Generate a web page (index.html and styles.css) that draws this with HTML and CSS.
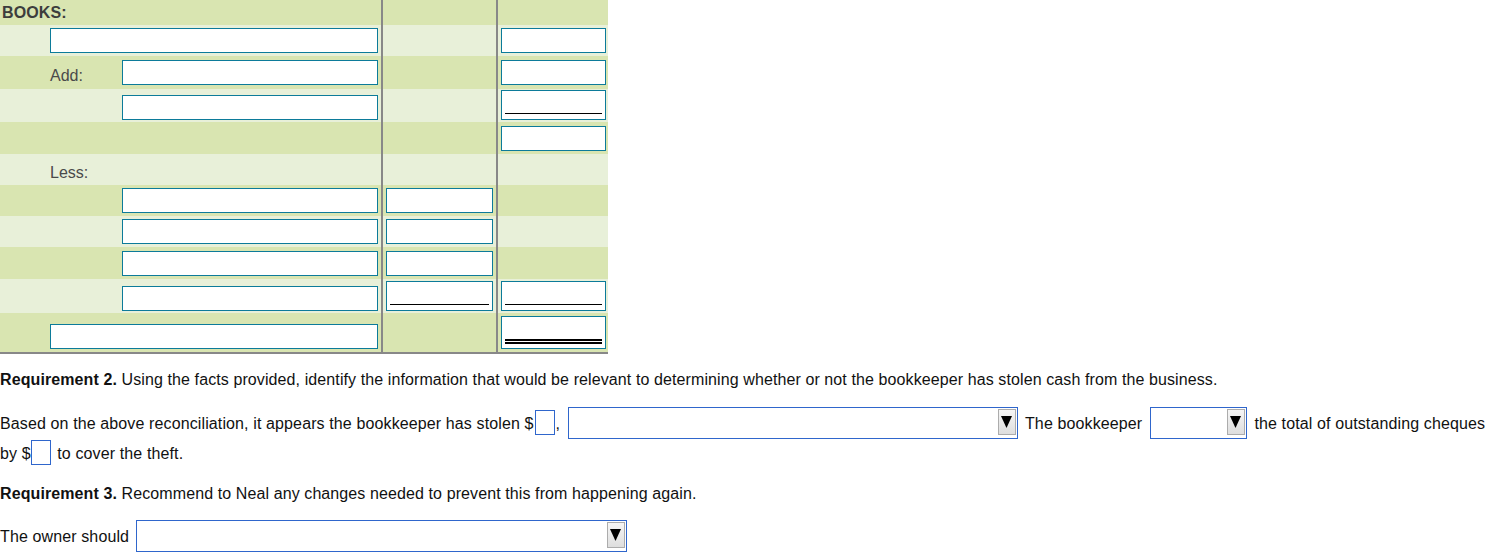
FILE: index.html
```html
<!DOCTYPE html>
<html>
<head>
<meta charset="utf-8">
<title>Bank reconciliation</title>
<link rel="stylesheet" href="styles.css">
</head>
<body>
<div class="recon">
  <div class="row dark r25">
    <div class="cell c1 books">BOOKS:</div><div class="cell c2"></div><div class="cell c3"></div>
  </div>
  <div class="row light r31">
    <div class="cell c1"><div class="inp"></div></div><div class="cell c2"></div><div class="cell c3"><div class="inp"></div></div>
  </div>
  <div class="row dark r33 pb4">
    <div class="cell c1"><span class="lbl">Add:</span><div class="inp"></div></div><div class="cell c2"></div><div class="cell c3"><div class="inp"></div></div>
  </div>
  <div class="row light r33 pb2">
    <div class="cell c1"><div class="inp ind"></div></div><div class="cell c2"></div><div class="cell c3"><div class="inp tall"><span class="rule"></span></div></div>
  </div>
  <div class="row dark r32">
    <div class="cell c1"></div><div class="cell c2"></div><div class="cell c3"><div class="inp"></div></div>
  </div>
  <div class="row light r31">
    <div class="cell c1"><span class="lbl">Less:</span></div><div class="cell c2"></div><div class="cell c3"></div>
  </div>
  <div class="row dark r31">
    <div class="cell c1"><div class="inp ind"></div></div><div class="cell c2"><div class="inp"></div></div><div class="cell c3"></div>
  </div>
  <div class="row light r31">
    <div class="cell c1"><div class="inp ind"></div></div><div class="cell c2"><div class="inp"></div></div><div class="cell c3"></div>
  </div>
  <div class="row dark r32">
    <div class="cell c1"><div class="inp ind"></div></div><div class="cell c2"><div class="inp"></div></div><div class="cell c3"></div>
  </div>
  <div class="row light r34 pb2">
    <div class="cell c1"><div class="inp ind"></div></div><div class="cell c2"><div class="inp tall"><span class="rule"></span></div></div><div class="cell c3"><div class="inp tall"><span class="rule"></span></div></div>
  </div>
  <div class="row dark r39">
    <div class="cell c1"><div class="inp"></div></div><div class="cell c2"></div><div class="cell c3"><div class="inp taller"><span class="rule2"></span></div></div>
  </div>
</div>

<p class="q q2"><b>Requirement 2.</b> Using the facts provided, identify the information that would be relevant to determining whether or not the bookkeeper has stolen cash from the business.</p>
<p class="fill f1">Based on the above reconciliation, it appears the bookkeeper has stolen $<span class="box"></span>, <span class="sel sel-wide"><span class="selin"><span class="btn"><svg width="11" height="12" viewBox="0 0 11 12"><polygon points="0,0 11,0 5.5,12" fill="#000"/></svg></span></span></span> The bookkeeper <span class="sel sel-narrow"><span class="selin"><span class="btn"><svg width="11" height="12" viewBox="0 0 11 12"><polygon points="0,0 11,0 5.5,12" fill="#000"/></svg></span></span></span> the total of outstanding cheques<br>by $<span class="box box-2"></span> to cover the theft.</p>
<p class="q q3"><b>Requirement 3.</b> Recommend to Neal any changes needed to prevent this from happening again.</p>
<p class="fill f2">The owner should <span class="sel sel-owner"><span class="selin"><span class="btn"><svg width="11" height="12" viewBox="0 0 11 12"><polygon points="0,0 11,0 5.5,12" fill="#000"/></svg></span></span></span></p>
</body>
</html>
```

FILE: styles.css
```css
* { box-sizing: border-box; }

body {
  margin: 0;
  font-family: "Liberation Sans", Arial, sans-serif;
  font-size: 16px;
  color: #111;
  background: #fff;
}

/* reconciliation table */
.recon {
  width: 608px;
  border-bottom: 2px solid #888;
}
.row { display: flex; }
.dark { background: #d9e5b1; }
.light { background: #e8f0d9; }
.r25 { height: 25px; }
.r31 { height: 31px; }
.r32 { height: 32px; }
.r33 { height: 33px; }
.r34 { height: 34px; }
.r39 { height: 39px; }

.cell {
  display: flex;
  align-items: flex-end;
  padding-bottom: 3px;
}
.pb4 .cell { padding-bottom: 4px; }
.pb2 .cell { padding-bottom: 2px; }

.c1 { width: 381px; padding-left: 50px; padding-right: 3px; }
.c2 { width: 115px; border-left: 2px solid #888; padding-left: 3px; padding-right: 3px; }
.c3 { width: 112px; border-left: 2px solid #888; padding-left: 3px; padding-right: 2px; }

.books {
  align-items: flex-start;
  padding: 4px 0 0 2px;
  font-weight: bold;
  line-height: 18px;
  letter-spacing: 0.1px;
  color: #3d3d3d;
}
.lbl {
  width: 72px;
  flex: none;
  line-height: 18px;
  color: #4a4a4a;
}

.inp {
  flex: 1;
  height: 25px;
  border: 1px solid #0c7b9a;
  background: #fff;
  display: flex;
  align-items: flex-end;
}
.inp.ind { margin-left: 72px; }
.inp.tall { height: 30px; padding: 0 3px 5px 3px; }
.inp.taller { height: 33px; padding: 0 3px 4px 3px; }
.rule { flex: 1; height: 1px; background: #000; }
.rule2 {
  flex: 1;
  height: 5px;
  border-top: 2px solid #000;
  border-bottom: 2px solid #000;
}

/* requirements */
.q { margin: 0; line-height: 20px; letter-spacing: 0.1px; }
.q2 { margin-top: 16px; }
.q3 { margin-top: 15px; }
.fill { margin: 0; line-height: 30px; letter-spacing: 0.12px; white-space: nowrap; }
.f1 { margin-top: 17px; }
.f2 { margin-top: 16px; }

.box {
  display: inline-block;
  overflow: hidden;
  width: 20px;
  height: 25px;
  margin: 0 1px;
  border: 1px solid #2f66cc;
  background: #fff;
    vertical-align: -6px;
}
.box-2 { margin: 0 2px 0 0; }

.sel {
  display: inline-block;
  overflow: hidden;
  height: 32px;
  margin: 0 3px;
  border: 1px solid #2f66cc;
  background: #fff;
  vertical-align: -10px;
}
.sel-wide { width: 450px; }
.sel-narrow { width: 97px; }
.sel-owner { width: 491px; margin-left: 2px; }

.selin {
  display: flex;
  justify-content: flex-end;
  align-items: flex-start;
  height: 100%;
  padding: 1px;
}
.btn {
  width: 18px;
  height: 26px;
  border: 1px solid #acacac;
  background: linear-gradient(#f6f6f6, #dedede);
  display: flex;
  align-items: center;
  justify-content: center;
}
.btn svg { display: block; }
```
